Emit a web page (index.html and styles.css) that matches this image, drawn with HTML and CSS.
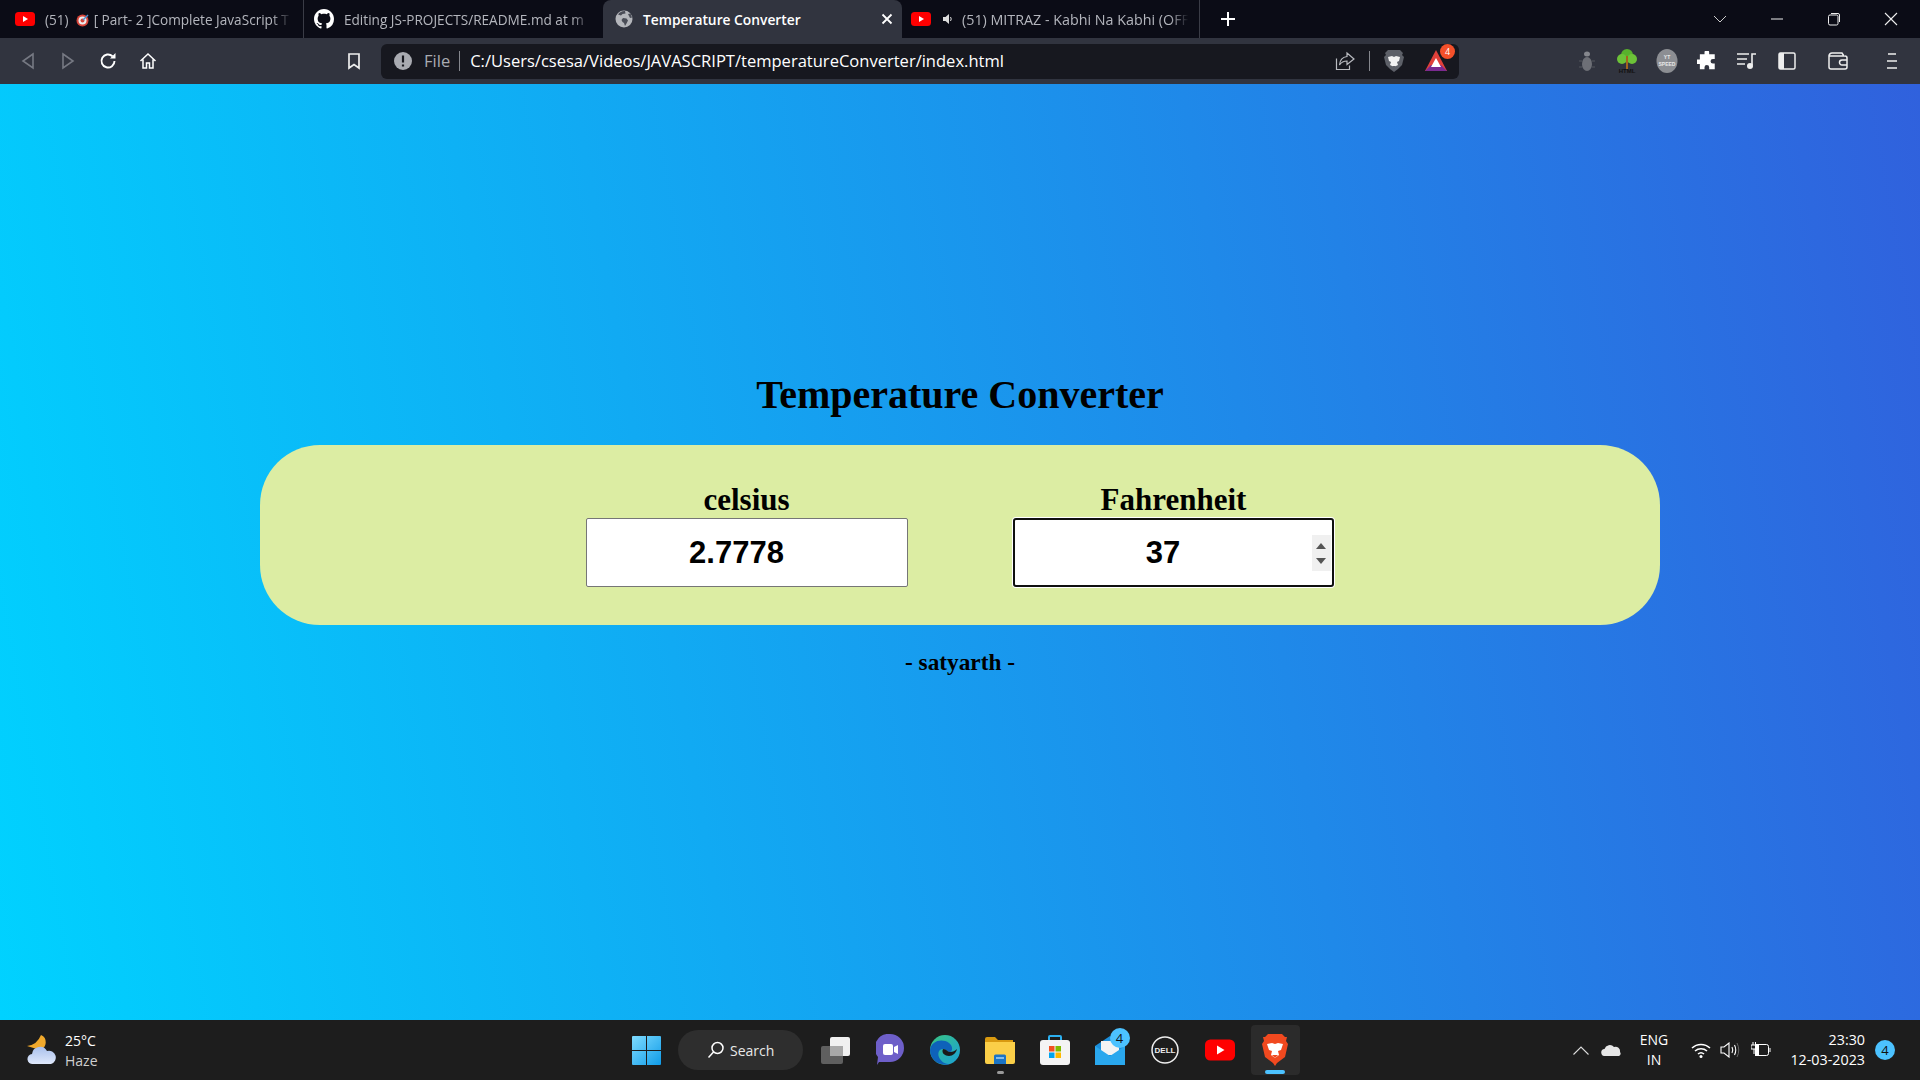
FILE: index.html
```html
<!DOCTYPE html>
<html lang="en">
<head>
  <meta charset="UTF-8">
  <meta name="viewport" content="width=device-width, initial-scale=1.0">
  <title>Temperature Converter</title>
  <link rel="stylesheet" href="styles.css">
</head>
<body>

<svg class="defs" width="0" height="0">
  <symbol id="yt" viewBox="0 0 20 14">
    <rect width="20" height="14" rx="3.5" fill="#f00"/>
    <path d="M8 4l5 3-5 3z" fill="#fff"/>
  </symbol>
  <symbol id="globe" viewBox="0 0 18 18">
    <circle cx="9" cy="9" r="8.5" fill="#b4b6bb"/>
    <path d="M3 4.5l3 1 1.5-1.5 3-.5-.5-2.5a8 8 0 0 0-7 3.5zM8 8l3.5.5 1.5 2-1.5 3-1.500 2.500-1-3-1.500-1-1-2zM13 4l2.500-.5 1.500 4-2 .5z" fill="#4a4d57"/>
  </symbol>
</svg>

<!-- tabs -->
<div class="tabstrip">
  <div class="tab">
    <svg class="tab-icon" width="20" height="14"><use href="#yt"/></svg>
    <span class="tab-title">(51)
      <svg class="target" width="14" height="14" viewBox="0 0 14 14"><circle cx="6.5" cy="7.5" r="6" fill="#d8453a"/><circle cx="6.5" cy="7.5" r="4" fill="#eee"/><circle cx="6.5" cy="7.5" r="2" fill="#d8453a"/><path d="M7 7l5-5" stroke="#4a90d0" stroke-width="1.5"/></svg>
      [ Part- 2 ]Complete JavaScript T</span>
  </div>
  <div class="tab tab-github">
    <svg class="tab-icon" width="20" height="20" viewBox="0 0 16 16"><path fill="#fff" d="M8 0C3.58 0 0 3.58 0 8c0 3.54 2.29 6.53 5.47 7.59.4.07.55-.17.55-.38 0-.19-.01-.82-.01-1.49-2.01.37-2.53-.49-2.69-.94-.09-.23-.48-.94-.82-1.13-.28-.15-.68-.52-.01-.53.63-.01 1.08.58 1.23.82.72 1.21 1.87.87 2.33.66.07-.52.28-.87.51-1.07-1.78-.2-3.64-.89-3.64-3.95 0-.87.31-1.59.82-2.15-.08-.2-.36-1.02.08-2.12 0 0 .67-.21 2.2.82.64-.18 1.32-.27 2-.27.68 0 1.36.09 2 .27 1.53-1.04 2.2-.82 2.2-.82.44 1.1.16 1.92.08 2.12.51.56.82 1.27.82 2.15 0 3.07-1.87 3.75-3.65 3.95.29.25.54.73.54 1.48 0 1.07-.01 1.93-.01 2.2 0 .21.15.46.55.38A8.013 8.013 0 0016 8c0-4.42-3.58-8-8-8z"/></svg>
    <span class="tab-title">Editing JS-PROJECTS/README.md at m</span>
  </div>
  <div class="tab tab-active">
    <svg class="tab-icon" width="18" height="18"><use href="#globe"/></svg>
    <span class="tab-title">Temperature Converter</span>
    <svg class="tab-close" width="12" height="12" viewBox="0 0 12 12"><path d="M1.5 1.5l9 9m0-9l-9 9" stroke="#fff" stroke-width="1.8"/></svg>
  </div>
  <div class="tab tab-last">
    <svg class="tab-icon" width="20" height="14"><use href="#yt"/></svg>
    <svg class="speaker" width="12" height="12" viewBox="0 0 12 12"><path d="M1 4h2.500L7 1v10L3.500 8H1z" fill="#ddd"/><path d="M8.500 4q1.500 2 0 4" stroke="#ddd" fill="none"/></svg>
    <span class="tab-title">(51) MITRAZ - Kabhi Na Kabhi (OFF</span>
  </div>
  <svg class="new-tab" width="16" height="16" viewBox="0 0 16 16"><path d="M8 1v14M1 8h14" stroke="#fff" stroke-width="2"/></svg>
  <div class="window-btns">
    <svg width="14" height="14" viewBox="0 0 14 14"><path d="M1 4l6 6 6-6" stroke="#ccc" fill="none"/></svg>
    <svg width="14" height="14" viewBox="0 0 14 14"><path d="M1 7h12" stroke="#eee"/></svg>
    <svg width="14" height="14" viewBox="0 0 14 14"><rect x="1.500" y="3" width="9.500" height="10" rx="1.500" stroke="#eee" fill="none"/><path d="M4 1.500h7a1.500 1.500 0 0 1 1.500 1.500v7" stroke="#eee" fill="none"/></svg>
    <svg width="14" height="14" viewBox="0 0 14 14"><path d="M1 1l12 12M13 1L1 13" stroke="#eee" stroke-width="1.100"/></svg>
  </div>
</div>

<!-- toolbar -->
<div class="toolbar">
  <div class="slot"><svg width="14" height="18" viewBox="0 0 14 18"><path d="M12 2L2 9l10 7z" stroke="#767983" stroke-width="1.6" fill="none"/></svg></div>
  <div class="slot"><svg width="14" height="18" viewBox="0 0 14 18"><path d="M2 2l10 7-10 7z" stroke="#767983" stroke-width="1.6" fill="none"/></svg></div>
  <div class="slot"><svg width="18" height="18" viewBox="0 0 18 18"><path d="M15.500 9a6.500 6.500 0 1 1-2-4.700" stroke="#fff" stroke-width="1.9" fill="none"/><path d="M16.500 1v5.500H11z" fill="#fff"/></svg></div>
  <div class="slot"><svg width="18" height="18" viewBox="0 0 18 18"><path d="M1.500 9L9 2l7.500 7M4 7.500V16h3.500v-5h3v5H14V7.500" stroke="#fff" stroke-width="1.5" fill="none"/></svg></div>
  <div class="slot bookmark"><svg width="14" height="18" viewBox="0 0 14 18"><path d="M2 2h10v14l-5-3.500L2 16z" stroke="#eee" stroke-width="1.7" fill="none"/></svg></div>

  <div class="urlbar">
    <svg class="info" width="18" height="18" viewBox="0 0 18 18"><circle cx="9" cy="9" r="9" fill="#a9abb1"/><path d="M9 3.500v7M9 12.500v2" stroke="#17181f" stroke-width="2.2"/></svg>
    <span class="url-scheme">File</span>
    <span class="url-sep"></span>
    <span class="url-text">C:/Users/csesa/Videos/JAVASCRIPT/temperatureConverter/index.html</span>
    <svg class="share" width="20" height="20" viewBox="0 0 20 20"><path d="M1.500 7.500v11h13v-4" stroke="#b9bbc0" stroke-width="1.2" fill="none"/><path d="M12 2l7 6-7 5.500V10q-5 0-7.500 4 .5-7.500 7.500-8.500z" stroke="#b9bbc0" stroke-width="1.2" fill="none"/></svg>
    <span class="url-sep url-sep-tall"></span>
    <svg class="shield" width="20" height="24" viewBox="0 0 20 24"><path d="M4 1h12l3 3-1 2 2 2-2 8-4 4-4 3-4-3-4-4-2-8 2-2-1-2z" fill="#5d6068"/><path d="M4 8l4-1 2 1 2-1 4 1-1 4-2 1 1 3-4 2-4-2 1-3-2-1z" fill="#f2f2f2"/><path d="M8 17h4l-2 2z" fill="#5d6068"/></svg>
    <div class="bat">
      <svg width="24" height="24" viewBox="0 0 24 24"><path d="M12 1l11 21H1z" fill="#e0403a"/><path d="M1 22l6-6h10l6 6z" fill="#7a2a90"/><path d="M12 9l5 9H7z" fill="#fff"/></svg>
      <span class="bat-badge">4</span>
    </div>
  </div>

  <div class="slot ext-first"><svg width="16" height="24" viewBox="0 0 16 24"><ellipse cx="8" cy="15" rx="5" ry="7" fill="#6d6f76"/><ellipse cx="8" cy="5" rx="3" ry="2.500" fill="#85878d"/><path d="M0 12h3M13 12h3M0 18h3M13 18h3" stroke="#55575e"/></svg></div>
  <div class="slot"><svg width="24" height="26" viewBox="0 0 24 26"><circle cx="12" cy="7" r="6" fill="#58b22c"/><circle cx="7" cy="11" r="5" fill="#6cc238"/><circle cx="17" cy="11" r="5" fill="#6cc238"/><path d="M12 8v13" stroke="#a5651c" stroke-width="2"/><text x="12" y="25" text-anchor="middle" class="ext-word">HTML</text></svg></div>
  <div class="slot"><svg width="22" height="24" viewBox="0 0 22 24"><ellipse cx="11" cy="12" rx="10.500" ry="12" fill="#8c8e93"/><text x="11" y="10" text-anchor="middle" class="ext-word ext-word-light">YT</text><text x="11" y="17" text-anchor="middle" class="ext-word ext-word-light">SPEED</text></svg></div>
  <div class="slot"><svg width="20" height="20" viewBox="0 0 20 20"><path d="M7 1a2.500 2.500 0 0 1 5 0v2h6v5h-2a2.500 2.500 0 0 0 0 5h2v6h-6v-2a2.500 2.500 0 0 0-5 0v2H2v-5.500H0a2.500 2.500 0 0 1 0-5h2V3h5z" transform="translate(1 .5) scale(.93)" fill="#fff"/></svg></div>
  <div class="slot"><svg width="20" height="18" viewBox="0 0 20 18"><path d="M0 2h12M0 7h10M0 12h8" stroke="#eee" stroke-width="1.6"/><path d="M15 13V2h4" stroke="#eee" stroke-width="1.6" fill="none"/><circle cx="13" cy="14" r="3" fill="#eee"/></svg></div>
  <div class="slot"><svg width="18" height="18" viewBox="0 0 18 18"><rect x="1" y="1" width="16" height="16" rx="1.500" stroke="#eee" stroke-width="1.5" fill="none"/><path d="M1 1h5v16H1z" fill="#eee"/></svg></div>
  <div class="slot wallet"><svg width="20" height="18" viewBox="0 0 20 18"><path d="M1 4a3 3 0 0 1 3-3h10l2 3H1v11a2 2 0 0 0 2 2h14a2 2 0 0 0 2-2V6a2 2 0 0 0-2-2M19 8h-5a2.500 2.500 0 0 0 0 5h5" stroke="#eee" stroke-width="1.5" fill="none"/></svg></div>
  <div class="slot menu"><svg width="14" height="18" viewBox="0 0 14 18"><path d="M3 2h8M2 9h10M2 16h10" stroke="#eee" stroke-width="1.5"/></svg></div>
</div>

<!-- the page itself -->
<div class="page">
  <h1 class="page-title">Temperature Converter</h1>
  <div class="converter">
    <div class="field">
      <label for="celsius">celsius</label>
      <input type="text" id="celsius" class="temp-input" value="2.7778">
    </div>
    <div class="field">
      <label for="fahrenheit">Fahrenheit</label>
      <div class="input-wrap">
        <input type="text" id="fahrenheit" class="temp-input temp-input-focus" value="37">
        <div class="spinner">
          <svg width="10" height="6" viewBox="0 0 10 6"><path d="M5 0l5 6H0z" fill="#555"/></svg>
          <svg width="10" height="6" viewBox="0 0 10 6"><path d="M5 6L0 0h10z" fill="#555"/></svg>
        </div>
      </div>
    </div>
  </div>
  <p class="credit">- satyarth -</p>
</div>

<!-- windows taskbar -->
<div class="taskbar">
  <div class="weather">
    <svg width="30" height="30" viewBox="0 0 30 30"><defs><linearGradient id="cloud" x1="0" y1="0" x2="0" y2="1"><stop offset="0" stop-color="#a9c0ec"/><stop offset="1" stop-color="#dfe8fb"/></linearGradient></defs><path d="M15 0a8 8 0 0 1-1 15L1 11q10-1 14-11z" fill="#f0a92c"/><path d="M6 29a5 5 0 0 1-1-10 8 8 0 0 1 15-3 6.500 6.500 0 0 1 4 13z" transform="translate(1 0)" fill="url(#cloud)"/></svg>
    <div class="weather-text">
      <span>25°C</span>
      <span class="weather-sub">Haze</span>
    </div>
  </div>
  <div class="start">
    <svg width="29" height="29" viewBox="0 0 29 29"><defs><linearGradient id="win" x1="0" y1="0" x2="1" y2="1"><stop offset="0" stop-color="#7fdcff"/><stop offset="1" stop-color="#0f9be8"/></linearGradient></defs><path d="M0 1a1 1 0 0 1 1-1h13v14H0zM15 0h13a1 1 0 0 1 1 1v13H15zM0 15h14v14H1a1 1 0 0 1-1-1zM15 15h14v13a1 1 0 0 1-1 1H15z" fill="url(#win)"/></svg>
  </div>
  <div class="search-pill">
    <svg width="18" height="18" viewBox="0 0 18 18"><circle cx="10.500" cy="7" r="5.500" stroke="#fff" stroke-width="1.5" fill="none"/><path d="M6.500 11L1.500 16.500" stroke="#fff" stroke-width="1.5"/></svg>
    <span>Search</span>
  </div>
  <div class="apps">
    <div class="app"><svg width="30" height="28" viewBox="0 0 30 28"><rect x="1" y="10" width="22" height="18" rx="2" fill="#5f5f5f"/><rect x="10" y="1" width="20" height="19" rx="2" fill="#f0f0f0"/><rect x="10" y="10" width="13" height="10" fill="#a8a8a8"/></svg></div>
    <div class="app"><svg width="28" height="32" viewBox="0 0 28 32"><path d="M14 1a14 14 0 0 1 14 14 14 14 0 0 1-14 14H3l-2 3 1-8A14 14 0 0 1 14 1z" transform="translate(0 -1)" fill="#6e5fc9"/><rect x="7" y="10" width="10" height="11" rx="2" fill="#fff"/><path d="M18 13l4-2v9l-4-2z" fill="#fff"/></svg></div>
    <div class="app"><svg width="30" height="30" viewBox="0 0 30 30"><defs><linearGradient id="edge" x1="0" y1="0" x2="1" y2="1"><stop offset="0" stop-color="#39c481"/><stop offset="1" stop-color="#1aa0d8"/></linearGradient></defs><circle cx="15" cy="15" r="15" fill="url(#edge)"/><path d="M0 15C1 6 12 3 19 8c4 3 4 8 1 9-3 0-3-3-7-3-5 0-6 6-3 10 2 3 5 5 10 5-3 1-6 1-8 0C5 28 0 22 0 15z" fill="#0e62ba"/><path d="M13 14c4 0 4 3 7 3 3 0 5-1 7-3-1 4-4 7-8 7-4 0-8-3-6-7z" fill="#1a1a1a"/></svg></div>
    <div class="app"><svg width="30" height="28" viewBox="0 0 30 28"><path d="M0 3a2 2 0 0 1 2-2h8l3 3h15v4H0z" fill="#d99a10"/><path d="M0 6h30v20a2 2 0 0 1-2 2H2a2 2 0 0 1-2-2z" fill="#fbcf48"/><path d="M9 28v-8a1.500 1.500 0 0 1 1.500-1.500h9A1.500 1.500 0 0 1 21 20v8z" fill="#1b74c4"/><path d="M11 22h8" stroke="#a8d4f5" stroke-width="1.5"/></svg></div>
    <div class="app"><svg width="30" height="30" viewBox="0 0 30 30"><path d="M9 6V2a1 1 0 0 1 1-1h10a1 1 0 0 1 1 1v4" stroke="#2cb0f0" stroke-width="2" fill="none"/><rect y="5" width="30" height="25" rx="3" fill="#f4f4f4"/><rect x="9" y="11" width="5.500" height="5.500" fill="#f25022"/><rect x="15.500" y="11" width="5.500" height="5.500" fill="#7fba00"/><rect x="9" y="17.500" width="5.500" height="5.500" fill="#00a4ef"/><rect x="15.500" y="17.500" width="5.500" height="5.500" fill="#ffb900"/></svg></div>
    <div class="app">
      <svg width="30" height="30" viewBox="0 0 30 30"><path d="M0 11L15 1l15 10v19H0z" fill="#1b8fdc"/><path d="M6 6h18v14H6z" fill="#f3f3f3"/><path d="M0 11l15 10 15-10v19H0z" fill="#2aa8ee"/></svg>
      <span class="mail-badge">4</span>
    </div>
    <div class="app"><svg width="28" height="28" viewBox="0 0 28 28"><circle cx="14" cy="14" r="13" stroke="#eee" stroke-width="1.5" fill="none"/><text x="14" y="17" text-anchor="middle" class="dell-word">DELL</text></svg></div>
    <div class="app"><svg width="30" height="22" viewBox="0 0 30 22"><use href="#yt"/></svg></div>
    <div class="app app-current">
      <svg width="26" height="34" viewBox="0 0 26 34"><path d="M6 1h14l3 3 2 0-1 4 2 3-3 13-8 6-2 3-2-3-8-6L0 11l2-3-1-4 2 0z" fill="#f1491f"/><path d="M5 11l5-1 3 1 3-1 5 1-2 6-3 1 1 4-4 3-4-3 1-4-3-1z" fill="#fff"/><path d="M10 22h6l-3 3z" fill="#f1491f"/></svg>
    </div>
  </div>
  <div class="tray">
    <div class="tray-slot tray-chevron"><svg width="16" height="9" viewBox="0 0 16 9"><path d="M.5 8.500L8 1l7.500 7.500" stroke="#ddd" stroke-width="1.1" fill="none"/></svg></div>
    <div class="tray-slot tray-cloud"><svg width="20" height="12" viewBox="0 0 20 12"><path d="M4 12a3.500 3.500 0 0 1-.5-7A5.500 5.500 0 0 1 13 3a4.500 4.500 0 0 1 6 5 2.500 2.500 0 0 1-1 4z" fill="#e6e6e6"/></svg></div>
    <div class="tray-lang"><span>ENG</span><span>IN</span></div>
    <div class="tray-slot tray-wifi"><svg width="20" height="15" viewBox="0 0 20 15"><path d="M1 5a13 13 0 0 1 18 0M4 8a9 9 0 0 1 12 0M7 11a4.500 4.500 0 0 1 6 0" stroke="#fff" stroke-width="1.5" fill="none"/><circle cx="10" cy="13.500" r="1.500" fill="#fff"/></svg></div>
    <div class="tray-slot tray-vol"><svg width="20" height="16" viewBox="0 0 20 16"><path d="M1 5h3l5-4v14l-5-4H1z" stroke="#fff" stroke-width="1.1" fill="none"/><path d="M12 5q1.500 3 0 6M14.500 3q2.500 5 0 10" stroke="#fff" stroke-width="1.1" fill="none"/><path d="M17 1q3.500 7 0 14" stroke="#666" fill="none"/></svg></div>
    <div class="tray-slot tray-batt"><svg width="20" height="16" viewBox="0 0 20 16"><rect x="4.500" y="2.500" width="13" height="11" rx="2" stroke="#fff" fill="none"/><path d="M4 2h4v12H4z" fill="#fff"/><path d="M18.500 6h1v4h-1z" fill="#fff"/><path d="M2 0v3M4.500 0v3M0 3h6v4H0zM3 7v5" stroke="#fff" fill="none"/></svg></div>
    <div class="tray-clock"><span>23:30</span><span>12-03-2023</span></div>
    <div class="notif-badge">4</div>
  </div>
</div>

</body>
</html>
```

FILE: styles.css
```css
* {
  box-sizing: border-box;
}

html, body {
  height: 100%;
}

body {
  margin: 0;
  display: flex;
  flex-direction: column;
  height: 100vh;
  overflow: hidden;
  font-family: "Open Sans", "Noto Sans", sans-serif;
}

.defs {
  position: absolute;
}

/* tab strip */
.tabstrip {
  display: flex;
  align-items: center;
  height: 38px;
  background-color: #0b0c16;
  color: #b4b6bd;
  font-size: 13.6px;
}

.tab {
  position: relative;
  display: flex;
  align-items: center;
  width: 304px;
  height: 38px;
  padding: 0 6px 0 15px;
  border-right: 1px solid #3a3c46;
}

.tab-github {
  width: 299px;
  padding-left: 10px;
  border-right: none;
}

.tab-active {
  width: 299px;
  padding-left: 12px;
  padding-right: 9px;
  border-right: none;
  border-radius: 8px 8px 0 0;
  background-color: #31343f;
  color: #fff;
  font-size: 13.8px;
  font-weight: 600;
}

.tab-last {
  width: 298px;
  padding-left: 9px;
  font-size: 14.3px;
}

.tab-icon {
  flex: none;
  margin-right: 10px;
}

.tab-title {
  flex: 1;
  white-space: nowrap;
  -webkit-mask-image: linear-gradient(to right, #000 90%, transparent 98%);
}

.tab-active .tab-title {
  -webkit-mask-image: none;
}

.target {
  margin: 0 0 0 4px;
  vertical-align: -2px;
}

.speaker {
  flex: none;
  margin-right: 8px;
  margin-left: 1px;
}

.tab-close {
  flex: none;
}

.new-tab {
  margin-left: 20px;
}

.window-btns {
  display: flex;
  align-items: center;
  margin-left: auto;
  gap: 43px;
  padding-right: 22px;
}

/* toolbar */
.toolbar {
  display: flex;
  align-items: center;
  height: 46px;
  padding-left: 8px;
  background-color: #31343f;
}

.slot {
  display: flex;
  justify-content: center;
  align-items: center;
  flex: none;
  width: 40px;
  height: 40px;
}

.bookmark {
  margin-left: 166px;
}

.urlbar {
  display: flex;
  align-items: center;
  flex: none;
  width: 1078px;
  height: 35px;
  margin-left: 7px;
  padding: 0 6px 0 13px;
  border-radius: 6px;
  background-color: #17181f;
  font-size: 16.55px;
}

.url-scheme {
  margin-left: 12px;
  padding-bottom: 2px;
  color: #a9abb1;
}

.url-sep {
  width: 1px;
  height: 20px;
  margin: 0 10px 0 9px;
  background-color: #85878d;
}

.url-text {
  flex: 1;
  padding-bottom: 2px;
  color: #fff;
  white-space: nowrap;
}

.url-sep-tall {
  margin: 0 14px 0 14px;
}

.bat {
  position: relative;
  display: flex;
  margin-left: 20px;
  margin-right: 5px;
}

.bat-badge {
  position: absolute;
  top: -5px;
  right: -7px;
  width: 15px;
  height: 15px;
  border-radius: 50%;
  background-color: #f4502a;
  color: #fff;
  font-size: 9px;
  line-height: 15px;
  text-align: center;
}

.ext-first {
  margin-left: 108px;
}

.ext-word {
  fill: #111;
  font-family: "Liberation Sans", sans-serif;
  font-size: 6px;
  font-weight: bold;
}

.ext-word-light {
  fill: #e8e8e8;
  font-size: 5px;
}

.wallet {
  margin-left: 11px;
}

.menu {
  margin-left: 14px;
}

/* page content */
.page {
  flex: 1;
  display: flex;
  flex-direction: column;
  align-items: center;
  background-image: linear-gradient(80deg, #00d2ff, #3061dd);
  color: #000;
  font-family: "Liberation Serif", serif;
}

.page-title {
  margin: 287px 0 27px;
  font-size: 40px;
  line-height: 47px;
  font-weight: bold;
}

.converter {
  display: flex;
  justify-content: center;
  gap: 105px;
  width: 1400px;
  height: 180px;
  padding-top: 38px;
  border-radius: 60px;
  background-color: #dceda3;
}

.field {
  display: flex;
  flex-direction: column;
  align-items: center;
  width: 322px;
}

.field label {
  font-size: 31px;
  line-height: 33px;
  margin-bottom: 2px;
  font-weight: bold;
}

.input-wrap {
  position: relative;
  align-self: flex-start;
  width: 321px;
}

.temp-input {
  display: block;
  width: 100%;
  height: 69px;
  padding: 0 20px 0 0;
  border: 1px solid #767676;
  border-radius: 2px;
  background-color: #fff;
  color: #000;
  font-family: "Liberation Sans", sans-serif;
  font-size: 31px;
  font-weight: bold;
  text-align: center;
  outline: none;
}

.temp-input-focus {
  border: 2px solid #101010;
  border-radius: 3px;
  box-shadow: 0 0 0 1px #fff;
}

.spinner {
  position: absolute;
  top: 17px;
  right: 3px;
  display: flex;
  flex-direction: column;
  justify-content: center;
  align-items: center;
  gap: 9px;
  width: 19px;
  height: 36px;
  background-color: #f0f0f0;
}

.credit {
  margin: 25px 0 0;
  font-size: 23.3px;
  line-height: 24px;
  font-weight: bold;
}

/* taskbar */
.taskbar {
  display: flex;
  align-items: center;
  height: 60px;
  background-color: #1d1d1d;
  color: #fff;
  font-size: 14px;
}

.weather {
  display: flex;
  align-items: center;
  gap: 9px;
  width: 618px;
  padding-left: 26px;
}

.weather-text {
  display: flex;
  flex-direction: column;
  padding-top: 2px;
  line-height: 20px;
}

.weather-sub {
  color: #cfcfcf;
}

.start {
  display: flex;
  justify-content: center;
  width: 56px;
}

.search-pill {
  display: flex;
  align-items: center;
  gap: 5px;
  width: 125px;
  height: 40px;
  margin-left: 4px;
  padding-left: 29px;
  border-radius: 20px;
  background-color: #2e2e2e;
  color: #e8e8e8;
}

.apps {
  display: flex;
  margin-left: 4.5px;
}

.app {
  position: relative;
  display: flex;
  justify-content: center;
  align-items: center;
  width: 55px;
  height: 50px;
}

/* running app dots */
.app:nth-child(4)::after {
  content: "";
  position: absolute;
  bottom: 1px;
  width: 7px;
  height: 3px;
  border-radius: 2px;
  background-color: #9a9a9a;
}

.app-current {
  width: 49px;
  margin-left: 3px;
  border-radius: 4px;
  background-color: #2b2b2b;
}

.app-current::after {
  content: "";
  position: absolute;
  bottom: 1px;
  width: 20px;
  height: 4px;
  border-radius: 2px;
  background-color: #4cc2ff;
}

.mail-badge {
  position: absolute;
  top: 3px;
  right: 8px;
  width: 20px;
  height: 20px;
  border-radius: 50%;
  background-color: #4cc2ff;
  color: #111;
  font-size: 13px;
  line-height: 20px;
  text-align: center;
}

.dell-word {
  fill: #eee;
  font-family: "Liberation Sans", sans-serif;
  font-size: 8px;
  font-weight: bold;
}

.tray {
  display: flex;
  align-items: center;
  margin-left: auto;
  padding-right: 25px;
}

.tray-slot {
  display: flex;
  justify-content: center;
  align-items: center;
}

.tray-chevron,
.tray-cloud {
  width: 30px;
}

.tray-lang {
  display: flex;
  flex-direction: column;
  align-items: center;
  width: 56px;
  line-height: 20px;
}

.tray-wifi {
  width: 38px;
}

.tray-vol {
  width: 20px;
}

.tray-batt {
  width: 42px;
}

.tray-clock {
  display: flex;
  flex-direction: column;
  align-items: flex-end;
  width: 83px;
  font-size: 14.3px;
  line-height: 20px;
  white-space: nowrap;
}

.notif-badge {
  width: 20px;
  height: 20px;
  margin-left: 10px;
  border-radius: 50%;
  background-color: #4cc2ff;
  color: #111;
  font-size: 13px;
  line-height: 20px;
  text-align: center;
}
```
